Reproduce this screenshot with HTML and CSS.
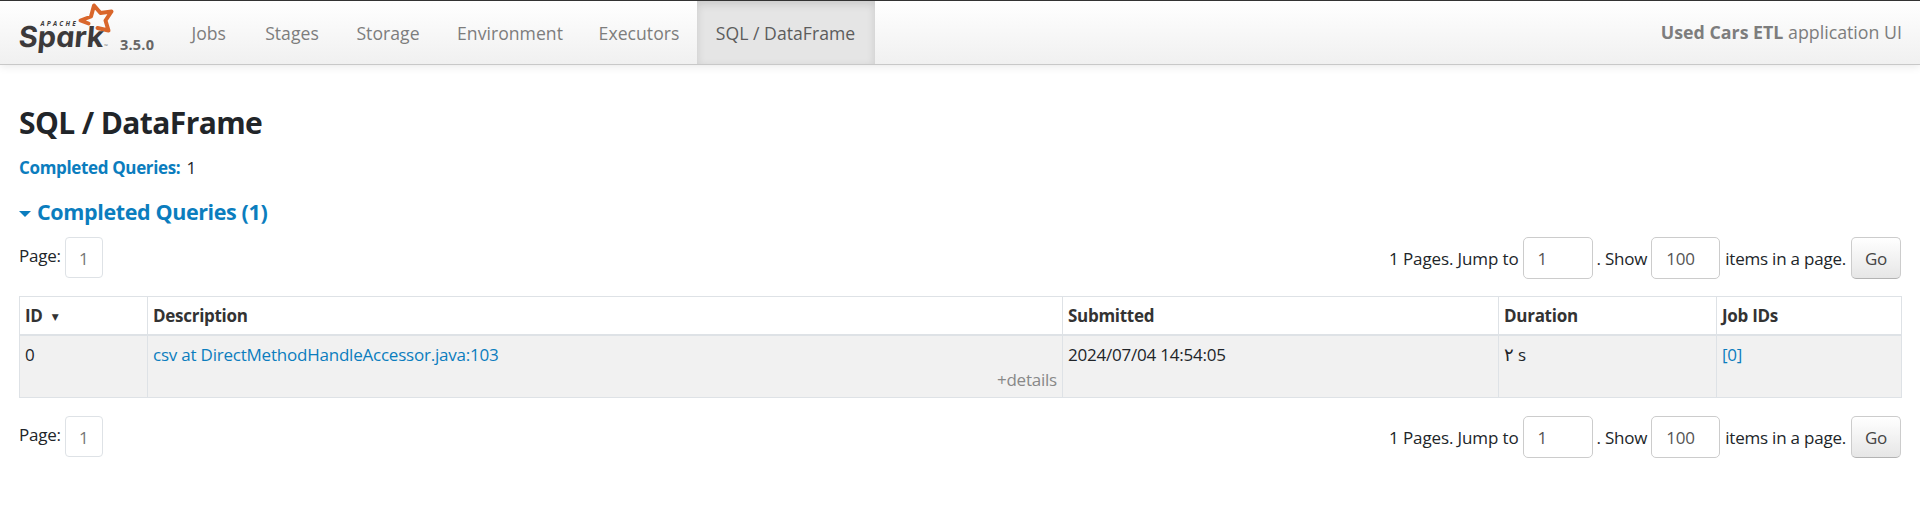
FILE: index.html
```html
<!DOCTYPE html>
<html lang="en">
<head>
<meta charset="utf-8">
<title>Used Cars ETL - SQL / DataFrame</title>
<link rel="stylesheet" href="styles.css">
</head>
<body>
<nav class="navbar">
  <a class="brand">
    <svg class="logo" width="92" height="54" viewBox="0 0 92 54">
      <path class="star" d="M69.500 22.500 L61.500 19.500 L72 15.500 L75 4.500 L81.500 12 L92.500 10.500 L86.500 19.500 L89.500 29.500 L78.500 27"/>
      <text class="logo-small" x="21.500" y="24.500" textLength="35">APACHE</text>
      <text class="logo-word" transform="translate(-1 45.500) skewX(-5)" x="0" y="0" textLength="85" lengthAdjust="spacingAndGlyphs">Spark</text>
      <text class="logo-tm" x="85" y="47">™</text>
    </svg>
    <span class="version">3.5.0</span>
  </a>
  <ul class="tabs">
    <li class="tab t-jobs">Jobs</li>
    <li class="tab t-stages">Stages</li>
    <li class="tab t-storage">Storage</li>
    <li class="tab t-env">Environment</li>
    <li class="tab t-exec">Executors</li>
    <li class="tab t-sql active">SQL / DataFrame</li>
  </ul>
  <p class="app-name"><strong>Used Cars ETL</strong> application UI</p>
</nav>
<main class="content">
  <h3 class="title">SQL / DataFrame</h3>
  <p class="summary"><a class="summary-link">Completed Queries:</a> <span>1</span></p>
  <h4 class="section"><span class="caret"></span><span>Completed Queries (1)</span></h4>
  <div class="pager">
    <div class="pages"><span class="page-label">Page:</span><a class="page-link">1</a></div>
    <form class="jump">
      <span class="j1">1 Pages. Jump to</span><span class="field f1">1</span><span class="j2">. Show</span><span class="field f2">100</span><span class="j3">items in a page.</span><span class="go">Go</span>
    </form>
  </div>
  <table class="queries">
    <colgroup><col class="c1"><col class="c2"><col class="c3"><col class="c4"><col class="c5"></colgroup>
    <thead><tr><th>ID <span class="sort">▼</span></th><th>Description</th><th>Submitted</th><th>Duration</th><th>Job IDs</th></tr></thead>
    <tbody><tr><td>0</td><td><a class="query">csv at DirectMethodHandleAccessor.java:103</a><span class="details">+details</span></td><td class="date">2024/07/04 14:54:05</td><td><span class="digit">٢</span> s</td><td><a>[0]</a></td></tr></tbody>
  </table>
  <div class="pager">
    <div class="pages"><span class="page-label">Page:</span><a class="page-link">1</a></div>
    <form class="jump">
      <span class="j1">1 Pages. Jump to</span><span class="field f1">1</span><span class="j2">. Show</span><span class="field f2">100</span><span class="j3">items in a page.</span><span class="go">Go</span>
    </form>
  </div>
</main>
</body>
</html>
```
FILE: styles.css
```css
* { box-sizing: border-box; }
body { margin: 0; background: #fff; color: #212529; font: 400 17px/25px "Open Sans", "Noto Sans", sans-serif; letter-spacing: -0.22px; }
p, h3, h4, ul { margin: 0; padding: 0; }
a { color: #0b7dbe; }

.navbar { display: flex; height: 65px; padding: 0 18px 0 19px; border-top: 1px solid #333; border-bottom: 1px solid #c8c8c8; background: linear-gradient(#fff, #f0f0f0); box-shadow: 0 1px 9px rgba(0,0,0,.1); color: #7d7d7d; }
.brand { display: flex; width: 152px; color: #666; }
.logo { flex: none; overflow: visible; }
.star { fill: none; stroke: #d9662b; stroke-width: 4; stroke-linejoin: round; stroke-linecap: round; }
.logo-small { font: italic 700 6.500px "Open Sans", sans-serif; fill: #3c3a3b; }
.logo-word { font: 700 29px Inter, sans-serif; font-feature-settings: "cv11"; fill: #3c3a3b; letter-spacing: 0; }
.logo-tm { font: 5px "Open Sans", sans-serif; fill: #777; }
.version { margin: 31px 0 0 9px; font-size: 14.500px; font-weight: 700; letter-spacing: .2px; }
.tabs { display: flex; list-style: none; }
.tab { padding-top: 20px; text-align: center; font-size: 17.600px; letter-spacing: .03px; }
.t-jobs { width: 75.500px; }
.t-stages { width: 91px; }
.t-storage { width: 101px; }
.t-env { width: 143px; }
.t-exec { width: 115px; }
.t-sql { width: 178px; }
.active { background: #e5e5e5; color: #5c5c5c; box-shadow: inset 0 3px 8px rgba(0,0,0,.125); }
.app-name { margin: 19px 0 0 auto; font-size: 17.800px; letter-spacing: 0; }
.app-name strong { font-weight: 700; }

.content { padding: 0 19px; }
.title { margin-top: 38px; font-size: 30px; line-height: 40px; font-weight: 700; letter-spacing: -.6px; }
.summary { margin-top: 12px; }
.summary-link { margin-right: 2px; font-weight: 700; letter-spacing: -.35px; }
.section { display: flex; align-items: center; gap: 6px; margin-top: 17px; color: #0b7dbe; font-size: 21.500px; line-height: 30px; font-weight: 700; letter-spacing: -.38px; }
.caret { border: 6px solid transparent; border-top-color: #0b7dbe; border-bottom: 0; margin-top: 3px; }
.pager { display: flex; justify-content: space-between; height: 42px; }
.section + .pager { margin-top: 10px; }
.pages { display: flex; gap: 4px; }
.page-label { padding-top: 6px; }
.page-link { width: 38px; height: 41px; border: 1px solid #dee2e6; border-radius: 4px; padding-top: 8px; text-align: center; color: #777; }
.jump { display: flex; align-items: center; }
.field { width: 70px; height: 42px; border: 1px solid #ccc; border-radius: 5px; padding: 8px 14px; color: #555; }
.f2 { width: 69px; }
.j1 { margin-right: 4px; letter-spacing: -.12px; }
.j2 { margin: 0 4px; }
.j3 { margin: 0 5px; }
.go { width: 50px; height: 42px; border: 1px solid #ccc; border-bottom-color: #b3b3b3; border-radius: 5px; background: linear-gradient(#fff, #e6e6e6); padding-top: 8px; text-align: center; color: #444; }

.queries { width: 1882px; margin: 17px 0 18px; border-collapse: collapse; table-layout: fixed; }
.c1 { width: 128px; }
.c2 { width: 915px; }
.c3 { width: 436px; }
.c4 { width: 218px; }
.c5 { width: 185px; }
.queries th, .queries td { border: 1px solid #dee2e6; padding: 6px 5px; text-align: left; vertical-align: top; }
.queries th { height: 38px; border-bottom-width: 2px; font-weight: 700; letter-spacing: -.28px; color: #333; }
.queries td { height: 62px; padding-bottom: 5px; background: #f1f1f1; }
.sort { margin-left: 5px; font: 9px "DejaVu Sans", sans-serif; vertical-align: 2px; }
.details { display: block; text-align: right; color: #888; }
.digit { font-family: "DejaVu Sans", sans-serif; font-size: 18px; line-height: 1; }
```
